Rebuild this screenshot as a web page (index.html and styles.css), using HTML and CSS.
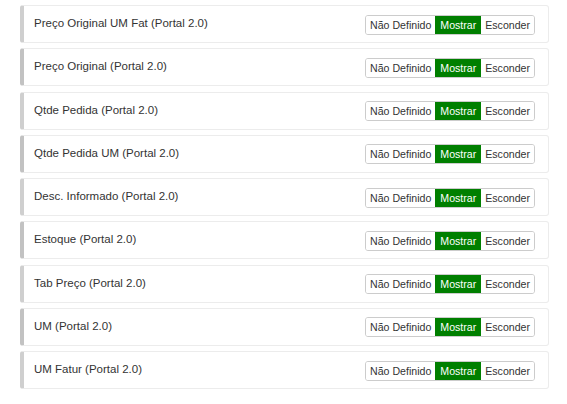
FILE: index.html
```html
<!DOCTYPE html>
<html>
<head>
<meta charset="utf-8">
<link rel="stylesheet" href="styles.css">
</head>
<body>
<div class="list">
  <div class="card"><span class="title">Preço Original UM Fat (Portal 2.0)</span><div class="seg"><span class="opt">Não Definido</span><span class="opt on">Mostrar</span><span class="opt">Esconder</span></div></div>
  <div class="card dark"><span class="title">Preço Original (Portal 2.0)</span><div class="seg"><span class="opt">Não Definido</span><span class="opt on">Mostrar</span><span class="opt">Esconder</span></div></div>
  <div class="card"><span class="title">Qtde Pedida (Portal 2.0)</span><div class="seg"><span class="opt">Não Definido</span><span class="opt on">Mostrar</span><span class="opt">Esconder</span></div></div>
  <div class="card dark"><span class="title">Qtde Pedida UM (Portal 2.0)</span><div class="seg"><span class="opt">Não Definido</span><span class="opt on">Mostrar</span><span class="opt">Esconder</span></div></div>
  <div class="card"><span class="title">Desc. Informado (Portal 2.0)</span><div class="seg"><span class="opt">Não Definido</span><span class="opt on">Mostrar</span><span class="opt">Esconder</span></div></div>
  <div class="card dark"><span class="title">Estoque (Portal 2.0)</span><div class="seg"><span class="opt">Não Definido</span><span class="opt on">Mostrar</span><span class="opt">Esconder</span></div></div>
  <div class="card"><span class="title">Tab Preço (Portal 2.0)</span><div class="seg"><span class="opt">Não Definido</span><span class="opt on">Mostrar</span><span class="opt">Esconder</span></div></div>
  <div class="card dark"><span class="title">UM (Portal 2.0)</span><div class="seg"><span class="opt">Não Definido</span><span class="opt on">Mostrar</span><span class="opt">Esconder</span></div></div>
  <div class="card"><span class="title">UM Fatur (Portal 2.0)</span><div class="seg"><span class="opt">Não Definido</span><span class="opt on">Mostrar</span><span class="opt">Esconder</span></div></div>
</div>
</body>
</html>
```
FILE: styles.css
```css
html, body {
  margin: 0;
  padding: 0;
  background: #fff;
}
body {
  font-family: "Liberation Sans", Arial, sans-serif;
  color: #333;
}
.list {
  display: flex;
  flex-direction: column;
  gap: 5.25px;
  width: 529px;
  margin-left: 20px;
  padding-top: 5px;
}
.card {
  box-sizing: border-box;
  height: 38px;
  display: flex;
  align-items: center;
  justify-content: space-between;
  border: 1px solid #ececec;
  border-left: 4px solid #cfcfcf;
  border-radius: 3px;
  padding: 0 13px 0 10px;
}
.card.dark {
  border-left-color: #c2c2c2;
}
.title {
  font-size: 11.5px;
  position: relative;
  top: -1px;
}
.seg {
  display: flex;
  border: 1px solid #ccc;
  border-radius: 3px;
  height: 18px;
  overflow: hidden;
  position: relative;
  top: 0.5px;
}
.opt {
  font-size: 10.6px;
  line-height: 18px;
  padding: 0 4px;
  color: #333;
  background: #fff;
}
.opt.on {
  background: #007f00;
  color: #fff;
  padding: 0 5px;
}
```
